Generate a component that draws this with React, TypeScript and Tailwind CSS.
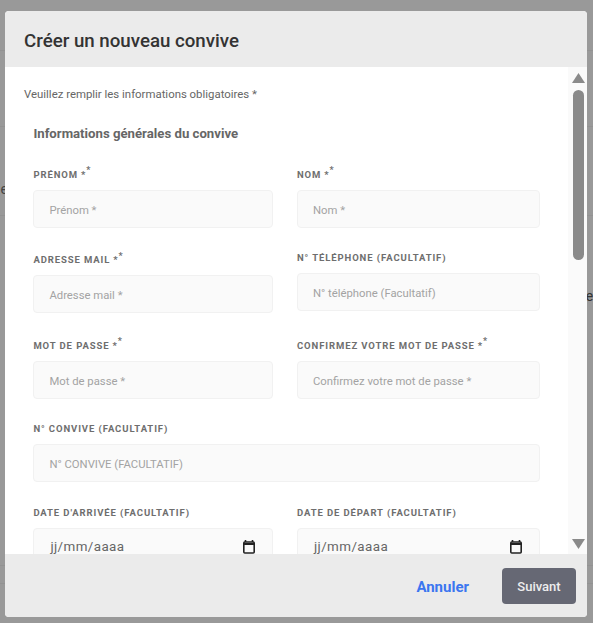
const font = { fontFamily: 'Roboto, sans-serif' };

function Field({ label, required, placeholder }: { label: string; required?: boolean; placeholder: string }) {
  return (
    <div className="mb-5">
      <label className={`flex items-end pb-[9px] text-[9.5px] leading-[12px] font-bold uppercase tracking-[0.9px] text-[#6e6e6e] ${required ? 'h-[27.5px]' : 'h-[25.5px]'}`}>
        {label}
        {required && <span className="ml-[3px]">*<sup className="text-[9px] tracking-normal">*</sup></span>}
      </label>
      <input
        placeholder={placeholder}
        className="block h-[38px] w-full rounded border border-[#f1f1f1] bg-[#fafafa] px-[15px] pt-[3px] text-[11.3px] outline-none placeholder:text-[#a3a3a3]"
      />
    </div>
  );
}

function DateField({ label }: { label: string }) {
  return (
    <div>
      <label className="flex h-[25.5px] items-end pb-[9px] text-[9.5px] leading-[12px] font-bold uppercase tracking-[0.9px] text-[#6e6e6e]">
        {label}
      </label>
      <div className="flex h-[38px] items-center justify-between rounded border border-[#f1f1f1] bg-[#fafafa] pr-4 pl-[16px] text-[13.4px] tracking-[0.4px] text-[#666]">
        <span className="pt-[2px]">jj/mm/aaaa</span>
        <svg width="14" height="16" viewBox="0 0 14 16" fill="none">
          <path d="M3.5 1v2M10.500 1v2" stroke="#222" strokeWidth="1.600" />
          <rect x="1.800" y="3" width="10.400" height="11" rx="1" stroke="#222" strokeWidth="1.600" />
          <path d="M1.800 5h10.400" stroke="#222" strokeWidth="2" />
        </svg>
      </div>
    </div>
  );
}

export default function App() {
  return (
    <div className="relative h-[623px] w-[593px] overflow-hidden bg-[#999999]" style={font}>
      {/* page behind the overlay */}
      <div className="flex flex-col">
        <div className="h-[51px] border-b border-[#929292]" />
        <div className="h-[76px] border-b border-[#929292]" />
        <div className="h-[89px] border-b border-[#929292]" />
        <div className="h-[350px] border-b border-[#929292]" />
        <div className="h-[18px] border-b border-[#929292]" />
      </div>
      <span className="absolute top-[179px] left-[-3px] text-sm text-[#444]">le</span>
      <span className="absolute top-[286px] right-[-5px] text-sm text-[#333]">er</span>

      <div className="absolute top-[11px] left-[5px] flex h-[606px] w-[582px] flex-col overflow-hidden rounded bg-white">
        <div className="flex h-[56px] shrink-0 items-center bg-[#ebebeb] pt-[5px] pl-[19px] text-[18.700px] font-medium text-[#333]">
          Créer un nouveau convive
        </div>

        <div className="flex min-h-0 flex-1">
          <div className="min-w-0 flex-1 overflow-hidden pl-[19px]">
            <p className="mt-[19px] text-[11.4px] leading-4 text-[#666]">Veuillez remplir les informations obligatoires *</p>
            <div className="pl-[9.400px]">
              <h2 className="mt-6 text-[13.200px] leading-4 font-bold text-[#666]">Informations générales du convive</h2>
              <div className="mt-5 grid w-[507px] grid-cols-[240px_243px] items-start gap-x-[23.600px]">
                <Field label="Prénom" required placeholder="Prénom *" />
                <Field label="Nom" required placeholder="Nom *" />
                <Field label="Adresse mail" required placeholder="Adresse mail *" />
                <Field label="N° téléphone (facultatif)" placeholder="N° téléphone (Facultatif)" />
                <Field label="Mot de passe" required placeholder="Mot de passe *" />
                <Field label="Confirmez votre mot de passe" required placeholder="Confirmez votre mot de passe *" />
                <div className="col-span-2">
                  <Field label="N° convive (facultatif)" placeholder="N° CONVIVE (FACULTATIF)" />
                </div>
                <DateField label="Date d'arrivée (facultatif)" />
                <DateField label="Date de départ (facultatif)" />
              </div>
            </div>
          </div>

          {/* scrollbar */}
          <div className="flex w-[19px] shrink-0 flex-col items-center bg-[#fafafa] pr-[2px] pl-[3px]">
            <svg className="mt-[6px] shrink-0" width="13" height="10" viewBox="0 0 13 10">
              <path d="M6.500 0 L13 10 H0 Z" fill="#8a8a8a" />
            </svg>
            <div className="mt-[7px] h-[170px] w-[11px] shrink-0 rounded-full bg-[#8a8a8a]" />
            <svg className="mt-auto mb-[5px] shrink-0" width="13" height="10" viewBox="0 0 13 10">
              <path d="M0 0 H13 L6.500 10 Z" fill="#8a8a8a" />
            </svg>
          </div>
        </div>

        <div className="flex h-[63px] shrink-0 items-start justify-end bg-[#ebebeb] pt-[14px] pr-[11px]">
          <button className="mt-[1px] mr-[33px] h-9 text-[15px] font-bold text-[#3b76f0]">Annuler</button>
          <button className="h-9 w-[74px] rounded bg-[#666874] pt-[1px] text-[13px] font-medium text-[#eee]">Suivant</button>
        </div>
      </div>
    </div>
  );
}
